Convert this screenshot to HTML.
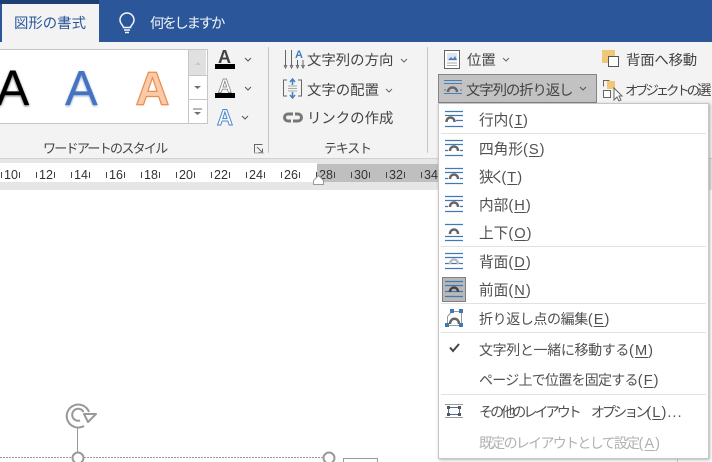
<!DOCTYPE html>
<html lang="ja"><head><meta charset="utf-8"><style>
html,body{margin:0;padding:0;background:#fff}
#p{position:relative;width:712px;height:462px;overflow:hidden;background:#fff;font-family:"Liberation Sans","Noto Sans CJK JP",sans-serif;color:#444}
#p div,#p svg{position:absolute}
.t{font-size:14.4px;line-height:18px;white-space:nowrap;font-family:"Noto Sans CJK JP","Liberation Sans",sans-serif}
.m{left:479px;font-size:14.67px;line-height:20px;white-space:nowrap;color:#505050;font-family:"Noto Sans CJK JP","Liberation Sans",sans-serif}
.m u{text-underline-offset:2px}
.l{font-family:"Liberation Sans",sans-serif;font-size:14.67px;letter-spacing:1px}
.i{font-family:"Liberation Mono",monospace;letter-spacing:0}
.sep{left:441px;width:265px;height:1px;background:#e1e1e1}
</style></head><body><div id="p">
<div style="left:0;top:0;width:712px;height:42px;background:#2b579a"></div>
<div style="left:0;top:0;width:99px;height:4px;background:#1e3f75"></div>
<div style="left:0;top:42px;width:712px;height:116px;background:#f3f3f3"></div>
<div style="left:2px;top:4px;width:97px;height:38px;background:#f3f3f3"></div>
<div class="t" style="left:14px;top:13px;line-height:20px;color:#2b579a">図形の書式</div>
<div class="t" style="left:150px;top:13px;line-height:20px;color:#f0f3f8;letter-spacing:-2.2px">何をしますか</div>
<svg style="left:117px;top:12px" width="20" height="24" viewBox="0 0 20 24" fill="none" stroke="#f3f5f9" stroke-width="1.5"><path d="M6.500 15.500c0-2-3.500-3.500-3.500-7.500a7 7 0 0 1 14 0c0 4-3.500 5.500-3.500 7.500z"/><path d="M7 18h6M8 20.500h4"/></svg>

<div style="left:0;top:158px;width:712px;height:1px;background:#d2d2d2"></div>
<div style="left:0;top:159px;width:712px;height:31px;background:#e6e6e6"></div>

<!-- gallery -->
<div style="left:-2px;top:49px;width:190px;height:73px;background:#fff;border:1px solid #c6c6c6"></div>
<div style="left:188px;top:49px;width:18px;height:73px;background:#fff;border:1px solid #c6c6c6;box-sizing:content-box"></div>
<div style="left:189px;top:50px;width:17px;height:25px;background:#e0e0e0"></div>
<div style="left:189px;top:75px;width:18px;height:1px;background:#c6c6c6"></div>
<div style="left:189px;top:99px;width:18px;height:1px;background:#c6c6c6"></div>
<svg style="left:0;top:42px" width="210" height="85" viewBox="0 42 210 85">
<defs><filter id="b" x="-20%" y="-20%" width="140%" height="140%"><feGaussianBlur stdDeviation="1"/></filter></defs>
<path d="M195 65l3-3 3 3z" fill="#c8c8c8"/><path d="M194 86h7l-3.500 3z" fill="#707070"/><path d="M193 109h9" stroke="#707070"/><path d="M194 112h7l-3.500 3z" fill="#707070"/>
<text x="-4" y="106" font-size="50" font-family="Liberation Sans" fill="#555" filter="url(#b)">A</text>
<text x="-4" y="105" font-size="50" font-family="Liberation Sans" fill="#000">A</text>
<text x="65" y="106" font-size="49" font-family="Liberation Sans" fill="#8a9cb5" filter="url(#b)">A</text>
<text x="65" y="105" font-size="49" font-family="Liberation Sans" fill="#4472c4">A</text>
<text x="135.500" y="105" font-size="47" font-weight="bold" font-family="Liberation Sans" fill="#f9cbab" stroke="#ed8c4a" stroke-width="1.200" stroke-linejoin="round">A</text>
</svg>

<!-- font A icons -->
<svg style="left:212px;top:46px" width="45" height="84" viewBox="212 46 45 84">
<text x="218" y="63" font-size="18" font-weight="bold" font-family="Liberation Sans" fill="#444">A</text>
<rect x="215" y="64" width="20" height="5" fill="#000"/>
<text x="218" y="92.500" font-size="19" font-weight="bold" font-family="Liberation Sans" fill="#fff" stroke="#777" stroke-width=".7">A</text>
<rect x="215" y="93" width="20" height="5" fill="#000"/>
<text x="217" y="125" font-size="22" font-weight="bold" font-family="Liberation Sans" fill="#fff" stroke="#4a86d0" stroke-width="1">A</text>
<path d="M245 58l3 3 3-3M245 87l3 3 3-3M242 116l3 3 3-3" fill="none" stroke="#555"/>
</svg>
<div class="t" style="left:43px;top:139px;font-size:13px;letter-spacing:-1.700px">ワードアートのスタイル</div>
<svg style="left:253px;top:143px" width="12" height="11" fill="none" stroke="#666"><path d="M1.500 9.500v-8h8M4 4l5 5M9.500 5.500v4h-4"/><path d="M1 10h10" stroke="#aaa"/></svg>
<div style="left:268px;top:47px;width:1px;height:106px;background:#c6c6c6"></div>

<!-- text group -->
<svg style="left:282px;top:46px" width="24" height="88" viewBox="282 46 24 88" fill="none">
<path d="M285.500 50v16M291.500 50v16M297.500 60v6M303 60v6" stroke="#666"/><path d="M284 65l1.500 3 1.500-3M290 65l1.500 3 1.500-3M296 65l1.500 3 1.500-3M301.500 65l1.500 3 1.500-3" stroke="#666"/>
<text x="295" y="58" font-size="11" font-weight="bold" font-family="Liberation Sans" fill="#3f7fc4">A</text>
<path d="M287 80h-3.500v16h3.500M298 80h3.500v16h-3.500" stroke="#666"/><path d="M288 86h9M288 88.500h9M288 91h9" stroke="#aaa"/><path d="M292.500 85v-5M290 82l2.500-3 2.500 3M292.500 92v5M290 95l2.500 3 2.500-3" stroke="#3f7fc4" stroke-width="1.500"/>
<path d="M293 114h-5a3.500 3.500 0 0 0 0 7h3M293 121h5a3.500 3.500 0 0 0 0-7h-3" stroke="#777" stroke-width="3"/>
</svg>
<div class="t" style="left:307px;top:51px">文字列の方向</div>
<div class="t" style="left:307px;top:81px">文字の配置</div>
<div class="t" style="left:307px;top:109px">リンクの作成</div>
<div class="t" style="left:324px;top:139px;font-size:13px;letter-spacing:-1.200px">テキスト</div>
<svg style="left:380px;top:50px" width="30" height="50" fill="none" stroke="#666"><path d="M21 9l3 3 3-3M6 39l3 3 3-3"/></svg>
<div style="left:427px;top:47px;width:1px;height:106px;background:#c6c6c6"></div>

<!-- arrange -->
<svg style="left:442px;top:48px" width="22" height="22" fill="none"><rect x="2.500" y="2.500" width="15" height="18" fill="#fff" stroke="#666"/><rect x="5" y="5" width="10" height="8" fill="#dce6f2"/><path d="M6 12l3-3 2 2 2-3 2 4z" fill="#4a7ebb"/><path d="M5 15h10M5 17.500h10" stroke="#aaa"/></svg>
<div class="t" style="left:467px;top:51px">位置</div>
<svg style="left:500px;top:56px" width="12" height="8" fill="none" stroke="#666"><path d="M3 2l3 3 3-3"/></svg>
<svg style="left:600px;top:48px" width="22" height="22"><rect x="2" y="2" width="13" height="13" fill="#f0c678"/><rect x="8.500" y="8.500" width="10" height="10" fill="#fff" stroke="#555"/></svg>
<div class="t" style="left:626px;top:51px;letter-spacing:-.2px">背面へ移動</div>

<div style="left:438px;top:74px;width:157px;height:27px;background:#c2c2c2;border:1px solid #858585"></div>
<svg style="left:443px;top:79px" width="22" height="19" fill="none"><path d="M1 1.500h18M1 4.500h18M1 14.500h18M1 11h2M17 11h2" stroke="#4a7ebb"/><path d="M5 13c0-6 9-6 9 0" stroke="#666" stroke-width="2.500"/></svg>
<div class="t" style="left:466px;top:81px;letter-spacing:-1.100px">文字列の折り返し</div>
<svg style="left:577px;top:85px" width="12" height="8" fill="none" stroke="#555"><path d="M3 2l3 3 3-3"/></svg>
<svg style="left:601px;top:78px" width="24" height="24" fill="none"><path d="M2.500 8.500v-6h6" stroke="#666"/><rect x="6" y="3" width="8" height="8" fill="#f0c678"/><rect x="2.500" y="12.500" width="7" height="7" stroke="#666" fill="#fff"/><path d="M13 10v12l3-3 2 4 2-1-2-4h3z" fill="#fff" stroke="#666"/></svg>
<div class="t" style="left:625px;top:81px;font-size:13.3px;letter-spacing:-3px">オブジェクトの<span style="letter-spacing:0;font-size:14.4px">選択と表示</span></div>

<!-- ruler -->
<svg style="left:0;top:163px" width="438" height="28" viewBox="0 163 438 28" font-family="Liberation Sans" font-size="12.500" fill="#333">
<rect x="0" y="163" width="317" height="19" fill="#fff"/><rect x="317" y="164" width="121" height="18" fill="#bfbfbf"/>
<g text-anchor="middle">
<text x="11" y="179">10</text><text x="46" y="179">12</text><text x="81" y="179">14</text><text x="116" y="179">16</text><text x="151" y="179">18</text><text x="186" y="179">20</text><text x="221" y="179">22</text><text x="256" y="179">24</text><text x="291" y="179">26</text><text x="326" y="179">28</text><text x="361" y="179">30</text><text x="396" y="179">32</text><text x="431" y="179">34</text></g>
<g stroke="#444"><path d="M1.500 172v6M19.500 172v6M36.500 172v6M54.500 172v6M71.500 172v6M89.500 172v6M106.500 172v6M124.500 172v6M141.500 172v6M159.500 172v6M176.500 172v6M194.500 172v6M211.500 172v6M229.500 172v6M246.500 172v6M264.500 172v6M281.500 172v6M299.500 172v6M316.500 172v6M334.500 172v6M351.500 172v6M369.500 172v6M386.500 172v6M404.500 172v6M421.500 172v6"/></g>
<path d="M313.500 184.500v-4l5-5 5 5v4z" fill="#fff" stroke="#999"/>
</svg>

<!-- doc -->
<svg style="left:0;top:395px" width="438" height="67" viewBox="0 395 438 67" fill="none" stroke="#999">
<path d="M0 457.500h330" stroke-dasharray="2 1"/>
<path d="M77.500 428v24"/>
<circle cx="78" cy="458" r="5.500" fill="#fff" stroke-width="2"/><circle cx="329" cy="458" r="5.500" fill="#fff" stroke-width="2"/>
<path d="M89 412A11.500 11.500 0 1 0 84 426" stroke-width="2"/>
<path d="M83.500 412A6 6 0 1 0 80 420.500" stroke-width="2"/>
<path d="M84 414h12l-8 8z" fill="#fff" stroke-width="2" stroke-linejoin="round"/>
<rect x="343.500" y="458.500" width="34" height="10"/>
</svg>

<!-- menu -->
<div style="left:438px;top:103px;width:271px;height:356px;background:#fff;border:1px solid #c6c6c6;box-sizing:border-box;box-shadow:1px 1px 3px rgba(0,0,0,.3)"></div>
<div class="sep" style="top:133px"></div><div class="sep" style="top:246px"></div><div class="sep" style="top:303px"></div><div class="sep" style="top:332px"></div><div class="sep" style="top:394px"></div>
<div style="left:442px;top:277px;width:22px;height:23px;background:#b9b9b9;border:1px solid #7f7f7f"></div>
<svg style="left:440px;top:103px" width="30" height="356" viewBox="440 103 30 356" fill="none">
<g stroke="#4178b8" stroke-width="1.200">
<path d="M445 111.500h18M445 115.500h18M456 120.500h7M445 126.500h18"/>
<path d="M445 140.500h18M445 144.500h18M445 150.500h3M460 150.500h3M445 155.500h18"/>
<path d="M445 168.500h18M445 172.500h18M445 178.500h3M460 178.500h3M445 183.500h18"/>
<path d="M445 196.500h18M445 200.500h18M445 206.500h3M460 206.500h3M445 211.500h18"/>
<path d="M445 224.500h18M445 236.500h18M445 240.500h18"/>
<path d="M445 253.500h18M445 257.500h18M445 263.500h18M445 268.500h18"/>
<path d="M445 281.500h18M445 285.500h18M445 291.500h18M445 296.500h18"/>
</g>
<g stroke="#666" stroke-width="2.500">
<path d="M446.500 122c0-6 8-6 8 0"/><path d="M450 151c0-6 8-6 8 0"/><path d="M450 179c0-6 8-6 8 0"/><path d="M450 207c0-6 8-6 8 0"/><path d="M450 234c0-6 8-6 8 0"/><path d="M450 264c0-6 8-6 8 0" stroke="#bdbdbd"/><path d="M450 292c0-6 8-6 8 0" stroke="#444"/>
<path d="M450 324c0-7 9-7 9 0"/>
</g>
<path d="M452 311.500h9.500v14h-14v-9z" stroke="#999"/>
<g fill="#3f78b8"><rect x="445" y="323" width="4" height="4"/><rect x="459" y="323" width="4" height="4"/><rect x="450" y="309" width="4" height="4"/><rect x="459" y="309" width="4" height="4"/></g>
<path d="M450 347.500l3 3.500 6-7" stroke="#444" stroke-width="2"/>
<path d="M445 404.500h18M445 417.500h18" stroke="#999"/><rect x="448.500" y="407.500" width="11" height="7" stroke="#4a6f9e"/>
<g fill="#555"><rect x="447" y="406" width="3" height="3"/><rect x="458" y="406" width="3" height="3"/><rect x="447" y="413" width="3" height="3"/><rect x="458" y="413" width="3" height="3"/></g>
</svg>
<div class="m" style="top:110px">行内<span class="l">(<u class="i">I</u>)</span></div>
<div class="m" style="top:139px">四角形<span class="l">(<u>S</u>)</span></div>
<div class="m" style="top:167px">狭<span style="margin:0 -3.500px">く</span><span class="l">(<u>T</u>)</span></div>
<div class="m" style="top:195px">内部<span class="l">(<u>H</u>)</span></div>
<div class="m" style="top:223px">上下<span class="l">(<u>O</u>)</span></div>
<div class="m" style="top:252px">背面<span class="l">(<u>D</u>)</span></div>
<div class="m" style="top:280px">前面<span class="l">(<u>N</u>)</span></div>
<div class="m" style="top:309px;font-size:14px;letter-spacing:-.4px">折り返し点の編集<span class="l">(<u>E</u>)</span></div>
<div class="m" style="top:340px;font-size:14px;letter-spacing:-.36px">文字列と一緒に移動する<span class="l">(<u>M</u>)</span></div>
<div class="m" style="top:370px;font-size:14px;letter-spacing:-.75px">ページ上で位置を固定する<span class="l">(<u>F</u>)</span></div>
<div class="m" style="top:402px;font-size:14px;letter-spacing:-2.900px">その他のレイアウト<span style="margin-left:12px">オプション</span><span class="l">(<u>L</u>)...</span></div>
<div class="m" style="top:433px;font-size:14px;letter-spacing:-1.700px;color:#b1b1b1">既定のレイアウトとして設定<span class="l">(<u>A</u>)</span></div>
<div style="left:677px;top:459px;width:1px;height:3px;background:#bbb"></div>
</div></body></html>
